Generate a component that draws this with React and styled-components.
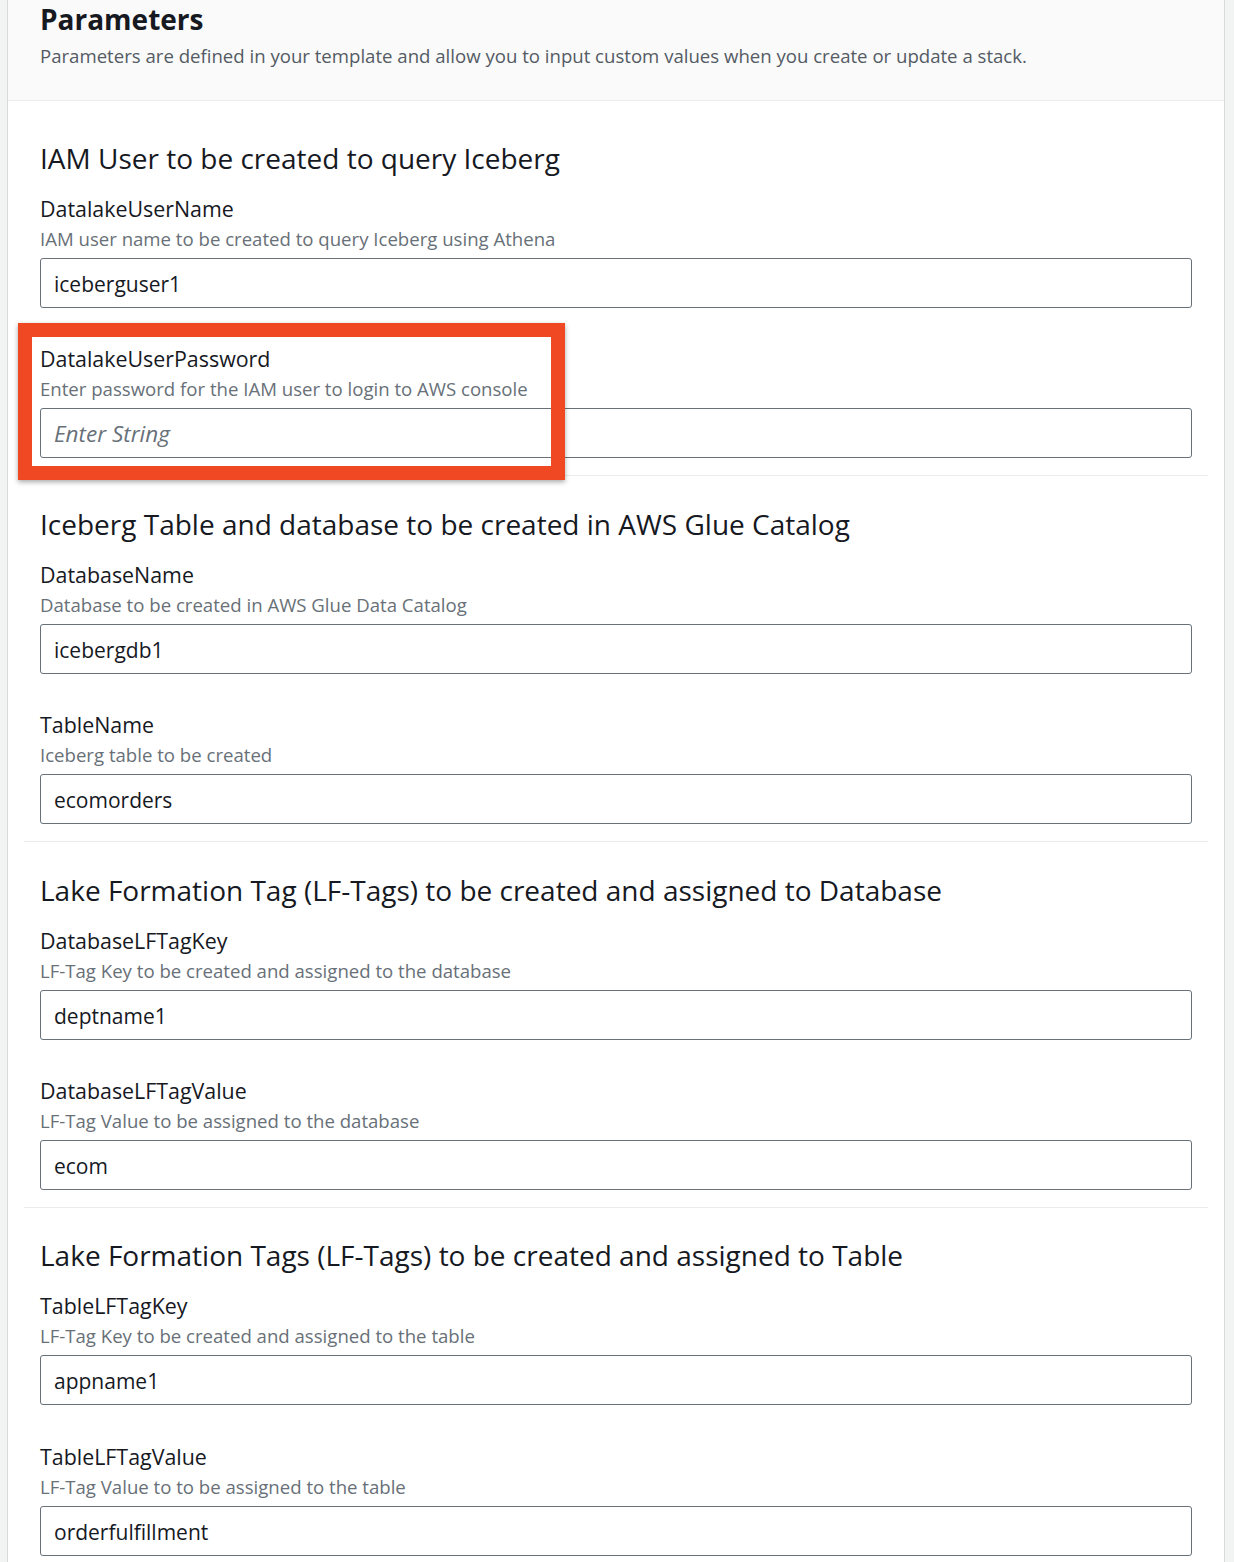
import styled, { createGlobalStyle } from "styled-components";

const GlobalStyle = createGlobalStyle`
  html, body {
    margin: 0;
    padding: 0;
    background: #f2f3f3;
  }
  body {
    font-family: "Open Sans", "Noto Sans", sans-serif;
    color: #16191f;
  }
`;

const sections = [
  {
    title: "IAM User to be created to query Iceberg",
    fields: [
      { name: "DatalakeUserName", desc: "IAM user name to be created to query Iceberg using Athena", value: "iceberguser1" },
      { name: "DatalakeUserPassword", desc: "Enter password for the IAM user to login to AWS console", placeholder: "Enter String", marked: true },
    ],
  },
  {
    title: "Iceberg Table and database to be created in AWS Glue Catalog",
    fields: [
      { name: "DatabaseName", desc: "Database to be created in AWS Glue Data Catalog", value: "icebergdb1" },
      { name: "TableName", desc: "Iceberg table to be created", value: "ecomorders" },
    ],
  },
  {
    title: "Lake Formation Tag (LF-Tags) to be created and assigned to Database",
    fields: [
      { name: "DatabaseLFTagKey", desc: "LF-Tag Key to be created and assigned to the database", value: "deptname1" },
      { name: "DatabaseLFTagValue", desc: "LF-Tag Value to be assigned to the database", value: "ecom" },
    ],
  },
  {
    title: "Lake Formation Tags (LF-Tags) to be created and assigned to Table",
    fields: [
      { name: "TableLFTagKey", desc: "LF-Tag Key to be created and assigned to the table", value: "appname1" },
      { name: "TableLFTagValue", desc: "LF-Tag Value to to be assigned to the table", value: "orderfulfillment" },
    ],
  },
];

const App = () => {
  return (
    <Page>
      <GlobalStyle />
      <Panel>
        <Header>
          <h2>Parameters</h2>
          <p>Parameters are defined in your template and allow you to input custom values when you create or update a stack.</p>
        </Header>
        <Body>
          {sections.map((section, i) => (
            <Section key={section.title} $first={i === 0} $last={i === sections.length - 1}>
              <SectionTitle>{section.title}</SectionTitle>
              {section.fields.map((field) => (
                <Field key={field.name}>
                  {field.marked && <Highlight />}
                  <Label>{field.name}</Label>
                  <Description>{field.desc}</Description>
                  <Input
                    type="text"
                    defaultValue={field.value}
                    placeholder={field.placeholder}
                    readOnly
                  />
                </Field>
              ))}
            </Section>
          ))}
        </Body>
      </Panel>
    </Page>
  );
};

const Page = styled.div`
  padding: 0 9px 0 7px;
  min-height: 1562px;
  box-sizing: border-box;
`;

const Panel = styled.div`
  background: #ffffff;
  border-left: 1px solid #d5dbdb;
  border-right: 1px solid #d5dbdb;
  min-height: 1562px;
`;

const Header = styled.div`
  background: #fafafa;
  border-bottom: 1px solid #eaeded;
  padding: 0 32px;
  height: 101px;
  box-sizing: border-box;

  h2 {
    margin: 0;
    padding-top: 1px;
    font-size: 28px;
    line-height: 36px;
    font-weight: 700;
    color: #16191f;
  }
  p {
    margin: 4px 0 0;
    font-size: 18.6px;
    line-height: 30px;
    color: #545b64;
  }
`;

const Body = styled.div`
  padding: 0 16px;
`;

const Section = styled.section`
  padding: ${(p) => (p.$first ? "39px" : "29.5px")} 16px 17px;
  border-bottom: ${(p) => (p.$last ? "none" : "1px solid #eaeded")};
`;

const SectionTitle = styled.h3`
  margin: 0 0 18px;
  font-size: 28px;
  line-height: 36px;
  font-weight: 400;
  color: #16191f;
`;

const Field = styled.div`
  position: relative;
  & + & {
    margin-top: 36.3px;
  }
`;

const Highlight = styled.div`
  position: absolute;
  left: -22px;
  top: -21px;
  width: 547px;
  height: 157px;
  box-sizing: border-box;
  border: 14px solid #ef4823;
  box-shadow: 0 2px 5px rgba(0, 0, 0, 0.35);
  z-index: 2;
  pointer-events: none;
`;

const Label = styled.div`
  font-size: 21.4px;
  line-height: 30px;
  color: #16191f;
`;

const Description = styled.div`
  font-size: 18.6px;
  line-height: 30px;
  color: #687078;
  margin-bottom: 4px;
`;

const Input = styled.input`
  display: block;
  width: 100%;
  height: 50px;
  box-sizing: border-box;
  border: 1px solid #687078;
  border-radius: 3px;
  padding: 2px 13px 0;
  font-family: inherit;
  font-size: 21px;
  color: #16191f;
  background: #ffffff;
  outline: none;

  &::placeholder {
    color: #687078;
    font-style: italic;
    font-size: 22.5px;
  }
`;

export default App;
